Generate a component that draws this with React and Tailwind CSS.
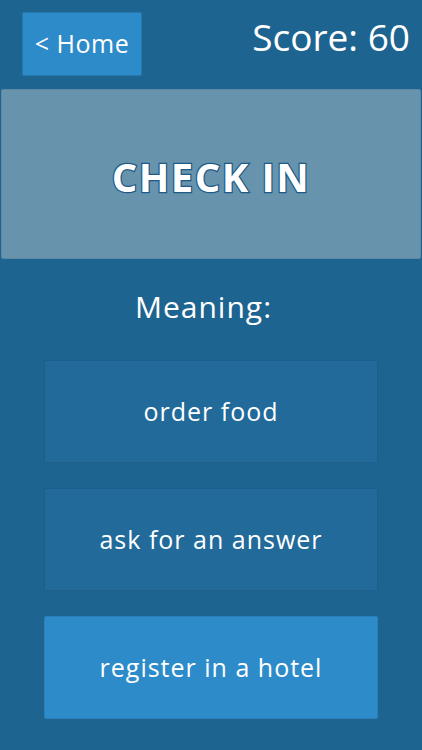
export default function App() {
  const options = [
    { label: "order food", active: false },
    { label: "ask for an answer", active: false },
    { label: "register in a hotel", active: true },
  ];
  return (
    <div
      className="w-[422px] h-[750px] bg-[#1e6491] overflow-hidden flex flex-col"
      style={{ fontFamily: '"Open Sans", "Noto Sans", sans-serif' }}
    >
      <div className="flex justify-between items-start pl-[22px] pr-[12px] pt-[12px] h-[89px]">
        <div className="w-[120px] h-[64px] bg-[#2d8bc9] border border-[#2479b0] rounded-[2px] flex items-center justify-center text-white text-[25px] tracking-[0.5px]">
          &lt; Home
        </div>
        <div className="text-white text-[37px] leading-none mt-[6px]">Score: 60</div>
      </div>
      <div className="mx-[1px] h-[170px] bg-[#6793ad] border border-[#5a88a5] rounded-[2px] flex items-center justify-center pt-[5px]">
        <span
          className="text-white font-bold text-[40px] tracking-[1.5px]"
          style={{ WebkitTextStroke: "2.5px #1e5a85", paintOrder: "stroke fill" }}
        >
          CHECK IN
        </span>
      </div>
      <div className="text-white text-[30px] font-medium text-center mt-[28px] leading-[40px] tracking-[1px] pr-[15px]">Meaning:</div>
      <div className="flex flex-col gap-[25px] px-[44px] mt-[33px]">
        {options.map((o) => (
          <div
            key={o.label}
            className={
              o.active
                ? "h-[103px] bg-[#2d8bc9] border border-[#2a80ba] rounded-[2px] flex items-center justify-center text-white text-[25px] tracking-[1px]"
                : "h-[103px] bg-[#216a99] border border-[#1d5f8b] rounded-[2px] flex items-center justify-center text-white text-[25px] tracking-[1px]"
            }
          >
            {o.label}
          </div>
        ))}
      </div>
    </div>
  );
}
